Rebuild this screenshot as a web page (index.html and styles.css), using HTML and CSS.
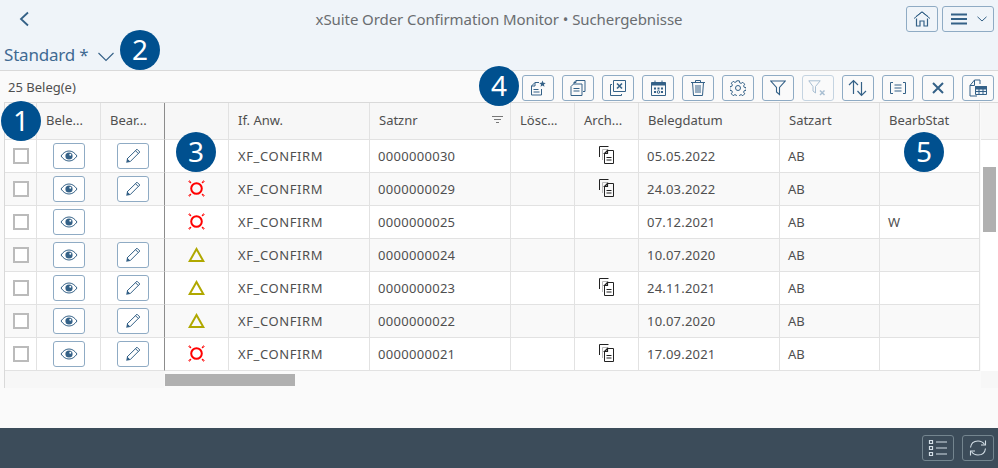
FILE: index.html
```html
<!DOCTYPE html>
<html lang="de">
<head>
<meta charset="utf-8">
<title>xSuite Order Confirmation Monitor</title>
<link rel="stylesheet" href="styles.css">
</head>
<body>
<svg class="sprite" width="0" height="0" aria-hidden="true">
  <defs>
    <symbol id="eye" viewBox="0 0 18 12"><path d="M1 6C3.500 2.500 6 1 9 1s5.500 1.500 8 5c-2.500 3.500-5 5-8 5S3.500 9.500 1 6z" fill="none" stroke="currentColor" stroke-width="1"/><circle cx="9" cy="6" r="3.600" fill="currentColor"/><circle cx="10.300" cy="4.800" r="1" fill="#fff"/></symbol>
    <symbol id="pen" viewBox="0 0 16 16"><path d="M2 11L12 1.200l2.800 2.800L5 13.800zM10.500 2.700l2.800 2.800" fill="none" stroke="currentColor" stroke-width="1"/><path d="M1.200 14.800L2 10.800 5.200 14z" fill="currentColor"/></symbol>
    <symbol id="err" viewBox="0 0 17 17"><circle cx="8.500" cy="8.500" r="5.300" fill="none" stroke="#f00" stroke-width="2"/><path d="M.5 1.500l2.500 1.500M1.500 .5l1.500 2.500M16.500 1.500L14 3M15.500 .5L14 3M.5 15.500L3 14M1.500 16.500L3 14M16.500 15.500L14 14M15.500 16.500L14 14" stroke="#f00" stroke-width="1" fill="none"/></symbol>
    <symbol id="warn" viewBox="0 0 17 15"><path d="M8.500 2L15.300 14H1.700z" fill="none" stroke="#b0a800" stroke-width="2"/></symbol>
    <symbol id="doc" viewBox="0 0 15 18"><path d="M.5 11V.5h9" fill="none" stroke="#222" stroke-width="1"/><path d="M3.500 14V3.500h5" fill="none" stroke="#bbb" stroke-width="1"/><path d="M5.500 17.500V7.500l3-3h6v13zM8.500 4.500v3h-3" fill="none" stroke="#222" stroke-width="1"/><path d="M5.500 7.500l3-3v3zM7.500 11.500h5M7.500 14h5" stroke="#222" stroke-width="1.200" fill="none"/></symbol>
  </defs>
</svg>
<div class="app">
  <header class="shell">
    <div class="titlebar">
      <button class="back" aria-label="Zurück"><svg width="10" height="16" viewBox="0 0 10 16"><path d="M9 1.500L2 8l7 6.500" fill="none" stroke="currentColor" stroke-width="1.800"/></svg></button>
      <h1 class="title">xSuite Order Confirmation Monitor • Suchergebnisse</h1>
      <div class="titleactions">
        <button class="btn"><svg width="18" height="16" viewBox="0 0 18 16"><path d="M1 7.500L9 1l8 6.500M3 5.500L9 .8l6 4.700" fill="none" stroke="currentColor" stroke-width="1"/><path d="M3.500 7.500v7.500h3.500v-5h4v5h3.500V7.500" fill="none" stroke="currentColor" stroke-width="1.200"/></svg></button>
        <button class="btn btn-menu"><svg class="bars" width="16" height="12" viewBox="0 0 16 12"><path d="M0 1.500h16M0 6h16M0 10.500h16" stroke="currentColor" stroke-width="2"/></svg><svg width="10" height="6" viewBox="0 0 10 6"><path d="M.5 .8L5 5l4.500-4.200" fill="none" stroke="currentColor" stroke-width="1"/></svg></button>
      </div>
    </div>
    <div class="variant"><span>Standard *</span><svg width="16" height="10" viewBox="0 0 16 10"><path d="M.5 1L8 8.500 15.500 1" fill="none" stroke="currentColor" stroke-width="1.100"/></svg></div>
  </header>

  <div class="toolbar">
    <span class="count">25 Beleg(e)</span>
    <div class="tools">
      <button class="btn"><svg width="16" height="16" viewBox="0 0 16 16"><path d="M9 2.500H5L1.500 6v9h10V9M5 2.500V6H1.500M3.500 9.500h5M3.500 12h6" fill="none" stroke="currentColor"/><path d="M12.500 .5l.9 2.200 2.300.2-1.800 1.500.6 2.300-2-1.200-2 1.200.6-2.300-1.800-1.500 2.300-.2z" fill="currentColor"/></svg></button>
      <button class="btn"><svg width="16" height="16" viewBox="0 0 16 16"><path d="M4 4V2.500l2-2h9v11h-2M6 .5v2H4" fill="none" stroke="currentColor"/><path d="M1 6.500l2.500-2.500H12v11.500H1zM3.500 8.500h6M3.500 11h6" fill="none" stroke="currentColor"/></svg></button>
      <button class="btn"><svg width="16" height="16" viewBox="0 0 16 16"><path d="M2 4.500H.5v11h11V14" fill="none" stroke="currentColor"/><path d="M3.500 .5h12v11h-12z" fill="none" stroke="currentColor"/><path d="M7 3.500l5 5M12 3.500l-5 5" stroke="currentColor" stroke-width="1.600"/></svg></button>
      <button class="btn"><svg width="15" height="16" viewBox="0 0 15 16"><path d="M.5 2.500h14v13H.5zM4 .5v3M11 .5v3" fill="none" stroke="currentColor"/><path d="M.5 2.500h14v3H.5z" fill="currentColor"/><path d="M3 7.500h2v2H3zM6.500 7.500h2v2h-2zM10 7.500h2v2h-2zM3 11h2v2H3zM10 11h2v2h-2z" fill="currentColor"/><circle cx="7.500" cy="12" r="1.300" fill="none" stroke="currentColor"/></svg></button>
      <button class="btn"><svg width="14" height="16" viewBox="0 0 14 16"><path d="M0 2.500h14M4.500 2.500V.5h5v2M1.500 2.500l1 13h9l1-13" fill="none" stroke="currentColor"/><path d="M5 5v8M7 5v8M9 5v8" stroke="currentColor"/></svg></button>
      <button class="btn"><svg width="16" height="16" viewBox="0 0 16 16"><path d="M6.700 .8h2.600l.4 2 1.400.6 1.700-1.100 1.900 1.900-1.100 1.700.6 1.400 2 .4v2.600l-2 .4-.6 1.400 1.100 1.700-1.900 1.900-1.700-1.100-1.400.6-.4 2H6.700l-.4-2-1.400-.6-1.700 1.100-1.900-1.900 1.100-1.700-.6-1.400-2-.4V6.700l2-.4.6-1.400-1.100-1.700 1.900-1.900 1.700 1.100 1.400-.6z" fill="none" stroke="currentColor"/><circle cx="8" cy="8" r="2.500" fill="none" stroke="currentColor"/></svg></button>
      <button class="btn"><svg width="16" height="16" viewBox="0 0 16 16"><path d="M.8 1h14.400L9.500 7.500v7l-3-2.500V7.500z" fill="none" stroke="currentColor" stroke-width="1.100"/></svg></button>
      <button class="btn btn-off"><svg width="20" height="16" viewBox="0 0 20 16"><path d="M.8 .8h11.400L7.500 6.500v6.500L5 11V6.500z" fill="none" stroke="currentColor"/><path d="M12 10.500l4.500 4.500M16.500 10.500L12 15" stroke="currentColor" stroke-width="1.500"/></svg></button>
      <button class="btn"><svg width="20" height="18" viewBox="0 0 20 18"><path d="M5.500 15V1.500M1 6l4.500-4.500L10 6M13.500 3v13.500M9.500 12l4 4.500 4.500-4.500" fill="none" stroke="currentColor" stroke-width="1.200"/></svg></button>
      <button class="btn"><svg width="16" height="12" viewBox="0 0 16 12"><path d="M3 .5H.5v11H3M13 .5h2.500v11H13M4.500 3h7M4.500 6h7M4.500 9h7" fill="none" stroke="currentColor"/></svg></button>
      <button class="btn"><svg width="12" height="12" viewBox="0 0 12 12"><path d="M1 1l10 10M11 1L1 11" stroke="currentColor" stroke-width="2"/></svg></button>
      <button class="btn"><svg width="18" height="18" viewBox="0 0 18 18"><path d="M1 6.500L5.500 1H11v4M5.500 1v5.500H1V17h7" fill="none" stroke="currentColor"/><path d="M6.500 7.500h11v8h-11z" fill="#eff4f9" stroke="currentColor"/><path d="M6.500 7.500h11v2.500h-11zM6.500 12.500h11M10 8v8M14 8v8" fill="currentColor" stroke="currentColor"/></svg></button>
    </div>
  </div>

  <div class="datagrid">
    <div class="tablearea">
      <table class="table">
        <colgroup>
          <col class="c-sel"><col class="c-s"><col class="c-s"><col class="c-s"><col class="c-m"><col class="c-m"><col class="c-s"><col class="c-s"><col class="c-m"><col class="c-l"><col class="c-l">
        </colgroup>
        <thead>
          <tr>
            <th></th><th>Bele...</th><th class="fixed-end">Bear...</th><th></th><th>If. Anw.</th>
            <th><span class="th-sort">Satznr<svg width="11" height="8" viewBox="0 0 11 8"><path d="M0 .5h11M2 3.500h7M4 6.500h3" stroke="#777" stroke-width="1"/></svg></span></th>
            <th>Lösc...</th><th>Arch...</th><th>Belegdatum</th><th>Satzart</th><th>BearbStat</th>
          </tr>
        </thead>
        <tbody>
          <tr>
            <td class="ctr"><span class="check"></span></td>
            <td class="ctr"><button class="btn"><svg width="18" height="12"><use href="#eye"/></svg></button></td>
            <td class="ctr fixed-end"><button class="btn"><svg width="16" height="16"><use href="#pen"/></svg></button></td>
            <td></td><td>XF_CONFIRM</td><td>0000000030</td><td></td>
            <td class="ctr"><svg class="doc" width="15" height="18"><use href="#doc"/></svg></td>
            <td>05.05.2022</td><td>AB</td><td></td>
          </tr>
          <tr>
            <td class="ctr"><span class="check"></span></td>
            <td class="ctr"><button class="btn"><svg width="18" height="12"><use href="#eye"/></svg></button></td>
            <td class="ctr fixed-end"><button class="btn"><svg width="16" height="16"><use href="#pen"/></svg></button></td>
            <td class="ctr"><svg class="st" width="17" height="17"><use href="#err"/></svg></td><td>XF_CONFIRM</td><td>0000000029</td><td></td>
            <td class="ctr"><svg class="doc" width="15" height="18"><use href="#doc"/></svg></td>
            <td>24.03.2022</td><td>AB</td><td></td>
          </tr>
          <tr>
            <td class="ctr"><span class="check"></span></td>
            <td class="ctr"><button class="btn"><svg width="18" height="12"><use href="#eye"/></svg></button></td>
            <td class="ctr fixed-end"></td>
            <td class="ctr"><svg class="st" width="17" height="17"><use href="#err"/></svg></td><td>XF_CONFIRM</td><td>0000000025</td><td></td>
            <td></td>
            <td>07.12.2021</td><td>AB</td><td>W</td>
          </tr>
          <tr>
            <td class="ctr"><span class="check"></span></td>
            <td class="ctr"><button class="btn"><svg width="18" height="12"><use href="#eye"/></svg></button></td>
            <td class="ctr fixed-end"><button class="btn"><svg width="16" height="16"><use href="#pen"/></svg></button></td>
            <td class="ctr"><svg class="st" width="17" height="15"><use href="#warn"/></svg></td><td>XF_CONFIRM</td><td>0000000024</td><td></td>
            <td></td>
            <td>10.07.2020</td><td>AB</td><td></td>
          </tr>
          <tr>
            <td class="ctr"><span class="check"></span></td>
            <td class="ctr"><button class="btn"><svg width="18" height="12"><use href="#eye"/></svg></button></td>
            <td class="ctr fixed-end"><button class="btn"><svg width="16" height="16"><use href="#pen"/></svg></button></td>
            <td class="ctr"><svg class="st" width="17" height="15"><use href="#warn"/></svg></td><td>XF_CONFIRM</td><td>0000000023</td><td></td>
            <td class="ctr"><svg class="doc" width="15" height="18"><use href="#doc"/></svg></td>
            <td>24.11.2021</td><td>AB</td><td></td>
          </tr>
          <tr>
            <td class="ctr"><span class="check"></span></td>
            <td class="ctr"><button class="btn"><svg width="18" height="12"><use href="#eye"/></svg></button></td>
            <td class="ctr fixed-end"><button class="btn"><svg width="16" height="16"><use href="#pen"/></svg></button></td>
            <td class="ctr"><svg class="st" width="17" height="15"><use href="#warn"/></svg></td><td>XF_CONFIRM</td><td>0000000022</td><td></td>
            <td></td>
            <td>10.07.2020</td><td>AB</td><td></td>
          </tr>
          <tr>
            <td class="ctr"><span class="check"></span></td>
            <td class="ctr"><button class="btn"><svg width="18" height="12"><use href="#eye"/></svg></button></td>
            <td class="ctr fixed-end"><button class="btn"><svg width="16" height="16"><use href="#pen"/></svg></button></td>
            <td class="ctr"><svg class="st" width="17" height="17"><use href="#err"/></svg></td><td>XF_CONFIRM</td><td>0000000021</td><td></td>
            <td class="ctr"><svg class="doc" width="15" height="18"><use href="#doc"/></svg></td>
            <td>17.09.2021</td><td>AB</td><td></td>
          </tr>
        </tbody>
      </table>
      <div class="hscroll"><div class="hfixed"></div><div class="hthumb"></div></div>
    </div>
    <div class="vscroll">
      <div class="vhead"></div>
      <div class="vtrack"><div class="vthumb"></div></div>
      <div class="vfoot"></div>
    </div>
  </div>

  <div class="spacer"></div>

  <footer class="footer">
    <button class="btn btn-dark"><svg width="20" height="18" viewBox="0 0 20 18"><path d="M1.500 1.500h3v3h-3zM1.500 7.500h3v3h-3zM1.500 13.500h3v3h-3z" fill="none" stroke="currentColor" stroke-width="1.200"/><path d="M8 3h11M8 9h11M8 15h11" stroke="currentColor" stroke-width="1"/></svg></button>
    <button class="btn btn-dark"><svg width="18" height="18" viewBox="0 0 18 18"><path d="M1.500 8.500C2 4.500 5 2 9 2c3 0 5 1.200 6.500 3.500M16.500 9.500C16 13.500 13 16 9 16c-3 0-5-1.200-6.500-3.500" fill="none" stroke="currentColor" stroke-width="1.100"/><path d="M16.500 1.500v4.500H12M1.500 16.500V12H6" fill="none" stroke="currentColor" stroke-width="1.100"/></svg></button>
  </footer>

  <span class="badge b1">1</span>
  <span class="badge b2">2</span>
  <span class="badge b3">3</span>
  <span class="badge b4">4</span>
  <span class="badge b5">5</span>
</div>
</body>
</html>
```

FILE: styles.css
```css
* { box-sizing: border-box; }
html, body { margin: 0; height: 100%; overflow: hidden; }
body { font-family: "Noto Sans", "Liberation Sans", sans-serif; font-size: 13px; color: #4f4f4f; background: #fafafa; }
.sprite { position: absolute; }
.app { position: relative; width: 998px; height: 468px; display: flex; flex-direction: column; }

.btn {
  width: 32px; height: 26px; padding: 0; display: inline-flex; align-items: center; justify-content: center;
  background: transparent; border: 1px solid #8fabc4; border-radius: 3px; color: #346187; font: inherit;
}
.btn-off { border-color: #c5d4e1; color: #a9bfd2; }
.btn-menu { width: 52px; gap: 10px; }
.btn-dark { border-color: #74858f; color: #d3dee6; }
.bars { margin-left: 1px; }

.shell { height: 71px; background: #eff4f9; border-bottom: 1px solid #d9d9d9; flex: none; }
.titlebar { height: 38px; display: flex; align-items: flex-start; position: relative; }
.back { border: 0; background: none; padding: 0; margin: 11px 0 0 19px; color: #346187; display: flex; }
.title { position: absolute; left: 0; right: 0; top: 9px; margin: 0; text-align: center; font-size: 15px; letter-spacing: -.08px; line-height: 20px; font-weight: 400; color: #6a6d70; }
.titleactions { margin: 6px 4px 0 auto; display: flex; gap: 4px; }
.variant { display: flex; align-items: center; gap: 10px; padding-left: 4px; height: 32px; font-size: 17px; letter-spacing: -.2px; color: #3f6a92; }
.variant svg { margin-top: 6px; color: #346187; }

.toolbar { height: 31px; flex: none; display: flex; align-items: center; justify-content: space-between; padding: 0 4px 0 8px; background: #fafafa; }
.count { font-size: 13px; color: #4f4f4f; }
.tools { display: flex; gap: 8px; margin-top: 3px; }

.datagrid { display: flex; height: 286px; flex: none; margin-left: 4px; border-top: 1px solid #d9d9d9; }
.tablearea { width: 977px; flex: none; }
.table { width: 976px; border-collapse: separate; border-spacing: 0; table-layout: fixed; border-left: 1px solid #d9d9d9; background: #fff; }
.c-sel { width: 32px; }
.c-s { width: 64px; }
.c-m { width: 141px; }
.c-l { width: 100px; }
th { height: 37px; padding: 0 9px 2px; text-align: left; font-weight: 400; font-size: 13px; color: #4f4f4f; background: #f7f7f7; border-right: 1px solid #e2e2e2; border-bottom: 1px solid #e2e2e2; white-space: nowrap; }
td { height: 33px; padding: 0 8px; font-size: 13px; color: #4f4f4f; border-right: 1px solid #e2e2e2; border-bottom: 1px solid #e2e2e2; white-space: nowrap; }
tbody tr:nth-child(even) td { background: #f9f9f9; }
tbody td:nth-child(5) { padding-left: 9px; letter-spacing: .6px; }
tbody td:nth-child(6) { letter-spacing: .3px; }
tbody td:nth-child(9) { letter-spacing: .2px; }
th.fixed-end, td.fixed-end { border-right-color: #8c8c8c; }
.ctr { padding: 0; text-align: center; }
td .btn { vertical-align: middle; background: #fff; }
.th-sort { display: flex; align-items: center; justify-content: space-between; margin-right: -2px; }
.check { display: block; width: 16px; height: 16px; margin: 0 auto; border: 2px solid #bbb; background: #fff; }
.st { display: block; margin: -2px auto 0; }
.doc { display: block; margin: -2px auto 0; }

.hscroll { display: flex; height: 17px; }
.hfixed { width: 160px; background: #f7f7f7; border-left: 1px solid #d9d9d9; }
.hthumb { width: 130px; height: 12px; margin: 3px 0 0 1px; background: #b0b0b0; }

.vscroll { flex: 1; display: flex; flex-direction: column; background: #fff; }
.vhead { height: 37px; background: #f7f7f7; border-bottom: 1px solid #e2e2e2; }
.vtrack { flex: 1; padding: 27px 2px 0 2px; }
.vthumb { width: 13px; height: 65px; background: #b0b0b0; }
.vfoot { height: 17px; background: #f7f7f7; }

.spacer { flex: 1; background: #fafafa; }
.footer { height: 40px; flex: none; background: #3c4c5a; display: flex; justify-content: flex-end; align-items: center; gap: 8px; padding: 0 4px 0 0; }

.badge { position: absolute; width: 40px; height: 40px; border-radius: 50%; background: #00508f; color: #fff; font-size: 28px; line-height: 39px; text-align: center; }
.b1 { left: 1px; top: 101px; }
.b2 { left: 120px; top: 30px; }
.b3 { left: 176px; top: 132px; }
.b4 { left: 479px; top: 66px; }
.b5 { left: 904px; top: 132px; }
```
